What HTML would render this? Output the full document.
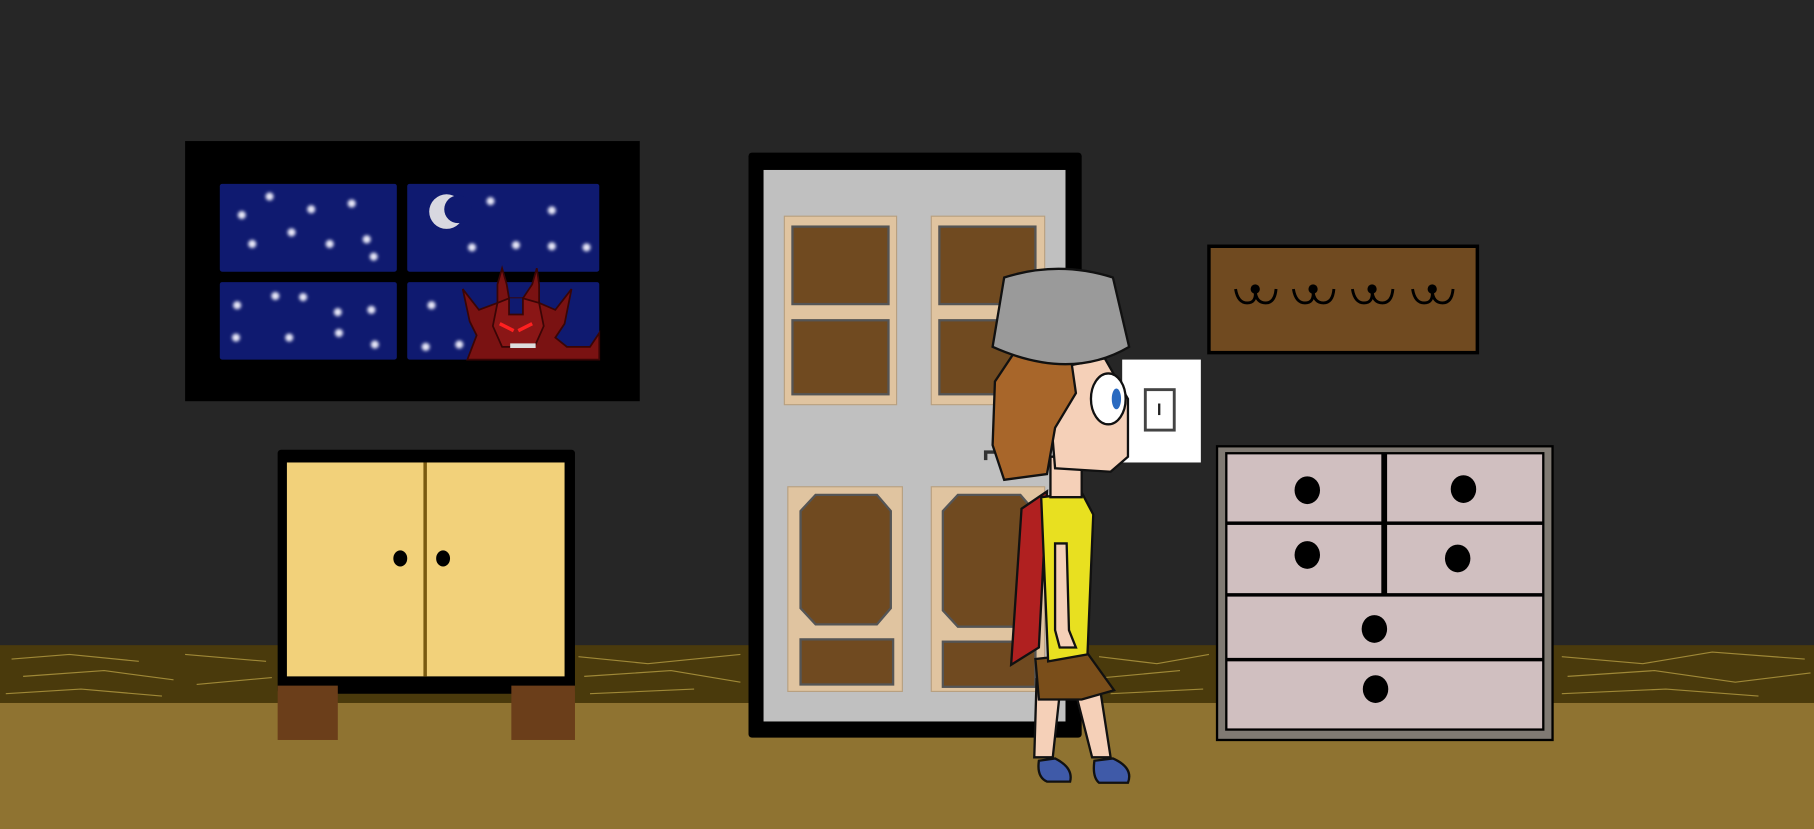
<!DOCTYPE html>
<html><head><style>html,body{margin:0;padding:0;background:#262626;overflow:hidden}svg{display:block}</style></head>
<body>
<svg width="1814" height="829" viewBox="0 0 1568 717" preserveAspectRatio="none" xmlns="http://www.w3.org/2000/svg">
<defs><filter id="g" x="-1" y="-1" width="3" height="3"><feGaussianBlur stdDeviation="1.3"/></filter></defs>
<rect width="1568" height="717" fill="#262626"/>
<rect x="0" y="558" width="1568" height="52" fill="#4a3a0c"/>
<g stroke="#a8913c" stroke-width="1" fill="none" opacity="0.9">
<path d="M10 570 L60 566 L120 572 M20 585 L90 580 L150 588 M5 600 L70 596 L140 602 M160 566 L230 572 M170 592 L235 586"/>
<path d="M500 568 L560 574 L640 566 M505 585 L580 580 L640 590 M510 600 L600 596"/>
<path d="M950 568 L1000 574 L1045 566 M955 586 L1020 580 M960 600 L1040 596"/>
<path d="M1350 568 L1420 574 L1480 564 L1560 570 M1355 585 L1430 580 L1500 590 L1565 582 M1350 600 L1440 596 L1520 602"/>
</g>
<rect x="0" y="608" width="1568" height="109" fill="#8f7331"/>
<rect x="160" y="122" width="393" height="225" fill="#000"/>
<g fill="#0f1a70">
<rect x="190" y="159" width="153" height="76" rx="2"/>
<rect x="352" y="159" width="166" height="76" rx="2"/>
<rect x="190" y="244" width="153" height="67" rx="2"/>
<rect x="352" y="244" width="166" height="67" rx="2"/>
</g>
<g fill="#e8e8f8" filter="url(#g)">
<circle cx="209" cy="186" r="3.5"/><circle cx="233" cy="170" r="3.5"/><circle cx="269" cy="181" r="3.5"/><circle cx="304" cy="176" r="3.5"/><circle cx="252" cy="201" r="3.5"/><circle cx="285" cy="211" r="3.5"/><circle cx="317" cy="207" r="3.5"/><circle cx="218" cy="211" r="3.5"/><circle cx="323" cy="222" r="3.5"/>
<circle cx="424" cy="174" r="3.5"/><circle cx="477" cy="182" r="3.5"/><circle cx="408" cy="214" r="3.5"/><circle cx="446" cy="212" r="3.5"/><circle cx="477" cy="213" r="3.5"/><circle cx="507" cy="214" r="3.5"/>
<circle cx="205" cy="264" r="3.5"/><circle cx="238" cy="256" r="3.5"/><circle cx="262" cy="257" r="3.5"/><circle cx="292" cy="270" r="3.5"/><circle cx="321" cy="268" r="3.5"/><circle cx="204" cy="292" r="3.5"/><circle cx="250" cy="292" r="3.5"/><circle cx="293" cy="288" r="3.5"/><circle cx="324" cy="298" r="3.5"/>
<circle cx="373" cy="264" r="3.5"/><circle cx="368" cy="300" r="3.5"/><circle cx="397" cy="298" r="3.5"/>
</g>
<circle cx="386" cy="183" r="15" fill="#d8d8e0"/>
<circle cx="396" cy="181" r="12" fill="#0f1a70"/>
<path d="M404 311 L412 290 L406 278 L400 250 L414 268 L430 262 L430 246 L434 232 L438 246 L440 258 L452 258 L460 246 L464 232 L466 246 L466 262 L480 268 L494 250 L488 280 L480 292 L490 300 L510 300 L518 288 L518 311 Z" fill="#7a1212" stroke="#3a0505" stroke-width="1.5"/>
<path d="M440 258 L452 258 L452 272 L440 272 Z" fill="#0f1a70"/>
<path d="M430 262 L440 258 L440 272 L452 272 L452 258 L466 262 L470 282 L462 300 L434 300 L426 282 Z" fill="#8a1616" stroke="#3a0505" stroke-width="1.5"/>
<path d="M432 280 L444 286 M460 280 L448 286" stroke="#ff2020" stroke-width="3"/>
<rect x="441" y="297" width="22" height="4" fill="#ddd"/>
<rect x="240" y="389" width="257" height="211" fill="#000" rx="3"/>
<rect x="248" y="400" width="240" height="185" fill="#f2d17a"/>
<rect x="366" y="400" width="3" height="185" fill="#7a5a10"/>
<ellipse cx="346" cy="483" rx="6" ry="7" fill="#000"/><ellipse cx="383" cy="483" rx="6" ry="7" fill="#000"/>
<rect x="240" y="593" width="52" height="47" fill="#6b3e1a"/><rect x="442" y="593" width="55" height="47" fill="#6b3e1a"/>
<rect x="647" y="132" width="288" height="506" fill="#000" rx="3"/>
<rect x="660" y="147" width="261" height="477" fill="#c0c0c0"/>
<g fill="#e0c4a0" stroke="#b8a080" stroke-width="1">
<rect x="678" y="187" width="97" height="163"/><rect x="805" y="187" width="98" height="163"/>
<rect x="681" y="421" width="99" height="177"/><rect x="805" y="421" width="98" height="177"/>
</g>
<g fill="#704a20" stroke="#555" stroke-width="2">
<rect x="685" y="196" width="83" height="67"/><rect x="685" y="277" width="83" height="64"/>
<rect x="812" y="196" width="83" height="67"/><rect x="812" y="277" width="83" height="64"/>
<path d="M705 428 L758 428 L770 442 L770 526 L758 540 L705 540 L692 526 L692 442 Z"/>
<path d="M828 428 L882 428 L894 442 L894 528 L882 542 L828 542 L815 528 L815 442 Z"/>
<rect x="692" y="553" width="80" height="39"/><rect x="815" y="555" width="80" height="39"/>
</g>
<path d="M852 398 L852 391 L860 391" stroke="#333" stroke-width="3" fill="none"/>
<rect x="970" y="311" width="68" height="89" fill="#fff"/>
<rect x="990" y="337" width="25" height="35" fill="#fff" stroke="#444" stroke-width="2.5"/>
<rect x="1001" y="349" width="2" height="10" fill="#222"/>
<rect x="1045" y="213" width="232" height="92" fill="#704a20" stroke="#000" stroke-width="3"/>
<g stroke="#000" stroke-width="2.5" fill="none">
<path d="M1068 250 Q1070 262 1078 262 Q1086 262 1085 252 Q1086 262 1094 262 Q1102 262 1103 250"/>
<path d="M1118 250 Q1120 262 1128 262 Q1136 262 1135 252 Q1136 262 1144 262 Q1152 262 1153 250"/>
<path d="M1169 250 Q1171 262 1179 262 Q1187 262 1186 252 Q1187 262 1195 262 Q1203 262 1204 250"/>
<path d="M1221 250 Q1223 262 1231 262 Q1239 262 1238 252 Q1239 262 1247 262 Q1255 262 1256 250"/>
</g>
<g fill="#000"><circle cx="1085" cy="250" r="4"/><circle cx="1135" cy="250" r="4"/><circle cx="1186" cy="250" r="4"/><circle cx="1238" cy="250" r="4"/></g>
<rect x="1051" y="385" width="292" height="256" fill="#000"/>
<rect x="1053" y="387" width="288" height="252" fill="#807a73"/>
<rect x="1059" y="391" width="276" height="241" fill="#000"/>
<g fill="#d0bfc0">
<rect x="1061" y="393" width="133" height="58"/><rect x="1199" y="393" width="134" height="58"/>
<rect x="1061" y="454" width="133" height="59"/><rect x="1199" y="454" width="134" height="59"/>
<rect x="1061" y="516" width="272" height="53"/><rect x="1061" y="572" width="272" height="58"/>
</g>
<g fill="#000"><ellipse cx="1130" cy="424" rx="11" ry="12"/><ellipse cx="1265" cy="423" rx="11" ry="12"/><ellipse cx="1130" cy="480" rx="11" ry="12"/><ellipse cx="1260" cy="483" rx="11" ry="12"/><ellipse cx="1188" cy="544" rx="11" ry="12"/><ellipse cx="1189" cy="596" rx="11" ry="12"/></g>
<g stroke="#111" stroke-width="2">
<path d="M896 588 L894 655 L910 655 L916 600 Z M930 600 L944 655 L960 655 L950 590 Z" fill="#f5d0b8"/>
<path d="M898 658 Q896 672 905 676 L925 676 Q928 664 912 656 Z" fill="#3f5aa8"/>
<path d="M946 658 Q944 672 950 677 L975 677 Q980 664 962 656 Z" fill="#3f5aa8"/>
<path d="M895 570 L940 565 L963 597 L935 605 L898 605 Z" fill="#7a4e1a"/>
<path d="M883 440 L905 425 L898 560 L874 575 Z" fill="#b02020"/>
<path d="M900 430 L935 426 L945 445 L940 566 L906 572 Z" fill="#e8e020"/>
<path d="M912 470 L922 470 L924 545 L930 560 L916 560 L912 545 Z" fill="#f5d0b8"/>
<path d="M908 395 L935 395 L935 430 L908 430 Z" fill="#f5d0b8"/>
<path d="M905 320 L955 310 L975 345 L975 395 L960 408 L912 405 Z" fill="#f5d0b8"/>
<path d="M880 300 L860 330 L858 385 L868 415 L905 410 L912 370 L930 340 L925 305 Z" fill="#a8662a"/>
<ellipse cx="958" cy="345" rx="15" ry="22" fill="#fff"/>
<path d="M868 240 Q915 225 962 240 L976 300 Q925 330 858 300 Z" fill="#9a9a9a"/>
</g>
<ellipse cx="965" cy="345" rx="4" ry="9" fill="#2a6ac0"/>
</svg>
</body></html>
